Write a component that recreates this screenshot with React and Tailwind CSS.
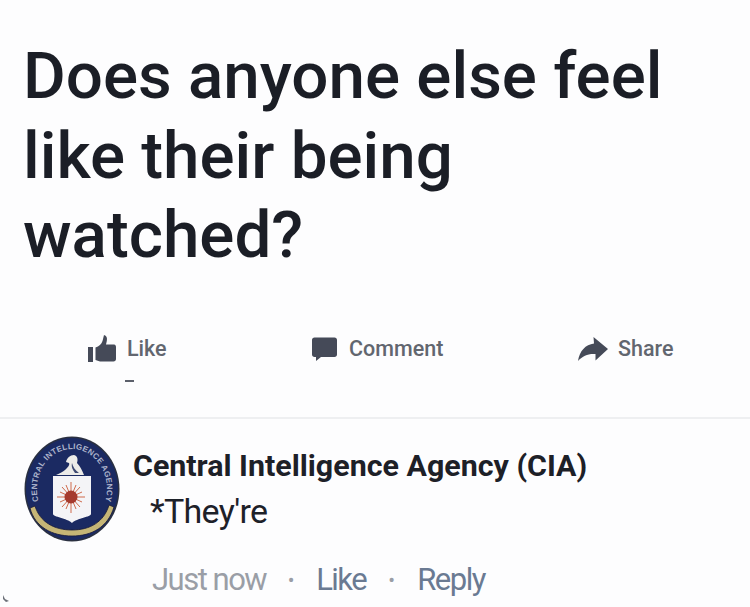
import React from "react";

function CiaLogo() {
  return (
    <svg width="96" height="106" viewBox="0 0 96 106" className="block shrink-0">
      <defs>
        <path id="ring" d="M14.9 66 A35 40 0 1 1 81.1 66" fill="none" />
      </defs>
      <ellipse cx="48" cy="53" rx="47.5" ry="52.5" fill="#2a3040" />
      <ellipse cx="48" cy="53" rx="46" ry="51" fill="#1b2a62" />
      <path d="M6 72 C11 91 28 100 48 100 C68 100 84 91 90 71 L85 69 C80 86 66 94 48 94 C30 94 16 86 11 70 Z" fill="#c6b676" stroke="#15183a" strokeWidth="0.8" />
      <text fontSize="8" fontWeight="700" fill="#aeb5cc" fontFamily="'Liberation Sans', sans-serif">
        <textPath href="#ring" startOffset="1" textLength="142">CENTRAL INTELLIGENCE AGENCY</textPath>
      </text>
      <path d="M32 39 C36 37 39 36 41 34 C44 31 46 29 45 27 L42 26 C43 22 46 19 50 19 C54 20 54 24 53 27 C56 30 58 34 60 39 Z" fill="#ecebe8" />
      <path d="M48 27 C49 31 51 34 55 37 L51 37 C49 34 47 31 48 27 Z" fill="#3f4a72" />
      <path d="M29 40 H67 V78 C67 81 53 82 48 87 C43 82 29 81 29 78 Z" fill="#f4f4f7" />
      <g stroke="#cf6a4c" strokeWidth="1">
        <line x1="47" y1="46" x2="47" y2="77" />
        <line x1="33" y1="61" x2="61" y2="61" />
        <line x1="38" y1="51" x2="56" y2="71" />
        <line x1="56" y1="51" x2="38" y2="71" />
        <line x1="42" y1="49" x2="52" y2="73" />
        <line x1="52" y1="49" x2="42" y2="73" />
        <line x1="36" y1="56" x2="58" y2="66" />
        <line x1="58" y1="56" x2="36" y2="66" />
      </g>
      <circle cx="47" cy="61" r="6.5" fill="#a53a2e" />
    </svg>
  );
}

const ThumbIcon = () => (
  <svg width="28" height="27" viewBox="0 0 28 27" className="block">
    <path d="M0 12 H5 V27 H0 Z M7.5 12.5 C11 11.5 13.5 9 14.5 6 L16 0 C18.5 0.5 19.5 3 18.8 6 L18 9.5 H26 C27.6 9.5 28 11 28 12 V24 C28 25.5 27 26.5 25.5 26.5 H12 L7.5 25 Z" fill="#454a58" />
  </svg>
);

const CommentIcon = () => (
  <svg width="25" height="24" viewBox="0 0 25 24" className="block">
    <path d="M2.5 0.5 H22.5 C24 0.5 25 1.5 25 3 V17.5 C25 19 24 20 22.5 20 H9 L4 24 V20 H2.5 C1 20 0 19 0 17.5 V3 C0 1.5 1 0.5 2.5 0.5 Z" fill="#454a58" />
  </svg>
);

const ShareIcon = () => (
  <svg width="30" height="24" viewBox="0 0 30 24" className="block">
    <path d="M15.5 0 L30 12 L17.5 23.5 V17 C10 16.5 5 18.5 0 24 C1.5 14 7.5 7.5 16 6.5 Z" fill="#454a58" />
  </svg>
);

function Action({ icon, label, gap }) {
  return (
    <div className={"flex items-center " + gap}>
      {icon}
      <span className="text-[21.5px] leading-[28px] font-medium text-[#62666f]">{label}</span>
    </div>
  );
}

export default function App() {
  return (
    <div className="relative w-[750px] h-[607px] overflow-hidden bg-[#fdfdfe] font-['Roboto',sans-serif]">
      <h1 className="pl-[23px] pt-[36px] w-[720px] text-[65.5px] leading-[79.5px] font-medium text-[#1b1e26]">
        Does anyone else feel
        <br />
        like their being
        <br />
        watched?
      </h1>
      <div className="mt-[58px] flex items-center pl-[88px] h-[32px]">
        <div className="w-[224px]"><Action icon={<ThumbIcon />} label="Like" gap="gap-[11px]" /></div>
        <div className="w-[266px]"><Action icon={<CommentIcon />} label="Comment" gap="gap-[12px]" /></div>
        <Action icon={<ShareIcon />} label="Share" gap="gap-[10px]" />
      </div>
      <div className="ml-[125px] mt-[15px] w-[9px] h-[2px] bg-[#5c606b]" />
      <div className="mt-[35px] h-[2px] bg-[#eeeff1]" />
      <div className="flex pl-[24px] pt-[17px]">
        <CiaLogo />
        <div className="ml-[13px] pt-[13px]">
          <div className="text-[30.4px] leading-[34px] font-bold text-[#1d2027] whitespace-nowrap">Central Intelligence Agency (CIA)</div>
          <div className="mt-[7px] pl-[17px] text-[34px] leading-[42px] text-[#1d2129] tracking-[-0.7px]">*They're</div>
          <div className="mt-[28px] pl-[19px] flex items-center text-[31px] leading-[40px] tracking-[-1.5px] text-[#9a9ea6]">
            <span>Just now</span>
            <span className="w-[50px] text-center text-[20px] tracking-normal">•</span>
            <span className="text-[#6a7a92]">Like</span>
            <span className="w-[51px] text-center text-[20px] tracking-normal">•</span>
            <span className="text-[#6a7a92]">Reply</span>
          </div>
        </div>
      </div>
      <svg width="8" height="8" viewBox="0 0 8 8" className="absolute left-[2px] top-[595px]">
        <path d="M1 0 L3 4 L7 6 L4 7 L1 4 Z" fill="#6c7078" />
      </svg>
    </div>
  );
}
